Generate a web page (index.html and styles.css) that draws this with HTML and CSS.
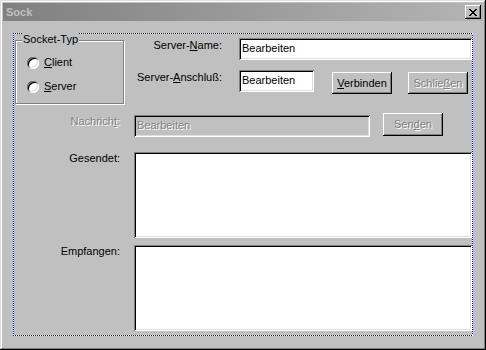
FILE: index.html
```html
<!doctype html>
<html>
<head>
    <link rel="stylesheet" href="styles.css">
    <title>Sock</title>
</head>
<body>
    <div class="window">
        <div class="titlebar">
            <span class="title">Sock</span>
            <button class="close" aria-label="Schließen">
                <svg width="8" height="7" viewBox="0 0 8 7" shape-rendering="crispEdges">
                    <path d="M0 0h2v1H0zM6 0h2v1H6zM1 1h2v1H1zM5 1h2v1H5zM2 2h4v1H2zM3 3h2v1H3zM2 4h4v1H2zM1 5h2v1H1zM5 5h2v1H5zM0 6h2v1H0zM6 6h2v1H6z" fill="#000"/>
                </svg>
            </button>
        </div>
        <div class="client">
            <div class="top">
                <div class="group">
                    <span class="group-title">Socket-Typ</span>
                    <label class="radio radio-first"><span class="dot"></span><u>C</u>lient</label>
                    <label class="radio radio-second"><span class="dot"></span><u>S</u>erver</label>
                </div>
                <div class="conn">
                    <div class="row row-name">
                        <span class="label label-wide">Server-<u>N</u>ame:</span>
                        <input class="field field-grow" value="Bearbeiten">
                    </div>
                    <div class="row row-port">
                        <span class="label label-wide">Server-<u>A</u>nschluß:</span>
                        <input class="field field-port" value="Bearbeiten">
                        <button class="btn btn-connect"><u>V</u>erbinden</button>
                        <button class="btn btn-shut" disabled>Schlie<u>ß</u>en</button>
                    </div>
                </div>
            </div>
            <div class="row row-msg">
                <span class="label label-narrow off">Nachrich<u>t</u>:</span>
                <input class="field field-msg" value="Bearbeiten" disabled>
                <button class="btn btn-send" disabled>Sen<u>d</u>en</button>
            </div>
            <div class="row row-sent">
                <span class="label label-narrow">Gesendet:</span>
                <textarea class="memo"></textarea>
            </div>
            <div class="row row-recv">
                <span class="label label-narrow">Empfangen:</span>
                <textarea class="memo"></textarea>
            </div>
        </div>
    </div>
</body>
</html>
```

FILE: styles.css
```css
body {
    margin: 0;
    background-color: #c0c0c0;
    font-family: "Liberation Sans", Arial, sans-serif;
    font-size: 11px;
    line-height: 13px;
    color: #000;
}

.window {
    box-sizing: border-box;
    width: 486px;
    height: 350px;
    padding: 3px;
    background-color: #c0c0c0;
    box-shadow: inset -1px -1px #000, inset 1px 1px #dfdfdf, inset -2px -2px #808080, inset 2px 2px #fff;
}

.titlebar {
    height: 18px;
    display: flex;
    align-items: center;
    justify-content: space-between;
    padding: 0 2px 0 3px;
    background: linear-gradient(to right, #808080, #b4b4b4);
}
.title {
    font-weight: bold;
    color: #c0c0c0;
}
.close {
    box-sizing: border-box;
    width: 16px;
    height: 14px;
    padding: 0;
    border: 0;
    display: flex;
    align-items: center;
    justify-content: center;
    background-color: #c0c0c0;
    box-shadow: inset -1px -1px #000, inset 1px 1px #fff, inset -2px -2px #808080;
}

/* dotted frame: blue/white pixels drawn under a transparent 1px border */
.client {
    box-sizing: border-box;
    width: 460px;
    height: 303px;
    margin: 12px 0 0 10px;
    border: 1px solid transparent;
    background:
        linear-gradient(#c0c0c0, #c0c0c0) padding-box,
        repeating-linear-gradient(90deg, #0000ff 0 1px, #ffffff 1px 2px) border-box left top / 100% 1px no-repeat,
        repeating-linear-gradient(90deg, #0000ff 0 1px, #ffffff 1px 2px) border-box left bottom / 100% 1px no-repeat,
        repeating-linear-gradient(180deg, #0000ff 0 1px, #ffffff 1px 2px) border-box left top / 1px 100% no-repeat,
        repeating-linear-gradient(180deg, #0000ff 0 1px, #ffffff 1px 2px) border-box right top / 1px 100% no-repeat;
}

.top {
    display: flex;
    align-items: flex-start;
}

.group {
    box-sizing: border-box;
    width: 109px;
    height: 64px;
    margin: 6px 0 0 1px;
    padding-left: 11px;
    display: flex;
    flex-direction: column;
    border: 1px solid #808080;
    box-shadow: inset 1px 1px #fff, 1px 1px #fff;
}
.group-title {
    align-self: flex-start;
    margin: -8px 0 0 -5px;
    padding: 0 1px;
    background-color: #c0c0c0;
}
.radio {
    display: flex;
    align-items: center;
}
.radio-first {
    margin-top: 10px;
}
.radio-second {
    margin-top: 11px;
}
.dot {
    width: 12px;
    height: 12px;
    margin-right: 5px;
    border-radius: 50%;
    background-color: #fff;
    box-shadow: inset 1px 1px #808080, inset -1px -1px #fff, inset 2px 2px #000, inset -2px -2px #dfdfdf;
}

.conn {
    flex: 1;
    display: flex;
    flex-direction: column;
}

.row {
    display: flex;
    align-items: flex-start;
}
.row-name {
    margin-top: 4px;
}
.row-port {
    margin-top: 10px;
}
.row-msg {
    margin-top: 9px;
}
.row-sent {
    margin-top: 15px;
}
.row-recv {
    margin-top: 7px;
}

.label {
    text-align: right;
    white-space: nowrap;
}
.label-wide {
    width: 98px;
    margin-right: 17px;
    padding-top: 1px;
}
.label-narrow {
    width: 106px;
    margin-right: 14px;
}
.row-msg .label-narrow {
    padding-top: 2px;
}
.off {
    color: #808080;
    text-shadow: 1px 1px #fff;
}

.field {
    box-sizing: border-box;
    height: 22px;
    padding: 0 1px 3px 3px;
    border: 0;
    outline: none;
    background-color: #fff;
    font: inherit;
    line-height: 13px;
    color: #000;
    box-shadow: inset 1px 1px #808080, inset -1px -1px #fff, inset 2px 2px #000, inset -2px -2px #dfdfdf;
}
.field-grow {
    flex: 1;
    min-width: 0;
}
.field-port {
    width: 75px;
}
.field-msg {
    width: 236px;
    margin-top: 2px;
    background-color: #c0c0c0;
    color: #808080;
    text-shadow: 1px 1px #fff;
}

.btn {
    box-sizing: border-box;
    width: 60px;
    height: 22px;
    padding: 0;
    border: 0;
    background-color: #c0c0c0;
    font: inherit;
    line-height: 13px;
    color: #000;
    box-shadow: inset -1px -1px #000, inset 1px 1px #fff, inset -2px -2px #808080;
}
.btn:disabled {
    color: #808080;
    text-shadow: 1px 1px #fff;
}
.btn-connect {
    margin: 2px 0 0 18px;
}
.btn-shut {
    margin: 2px 0 0 16px;
}
.btn-send {
    height: 23px;
    margin-left: 13px;
}

.memo {
    flex: 1;
    min-width: 0;
    box-sizing: border-box;
    height: 86px;
    padding: 2px 3px;
    border: 0;
    outline: none;
    resize: none;
    background-color: #fff;
    font: inherit;
    box-shadow: inset 1px 1px #808080, inset -1px -1px #fff, inset 2px 2px #000, inset -2px -2px #dfdfdf;
}
```
